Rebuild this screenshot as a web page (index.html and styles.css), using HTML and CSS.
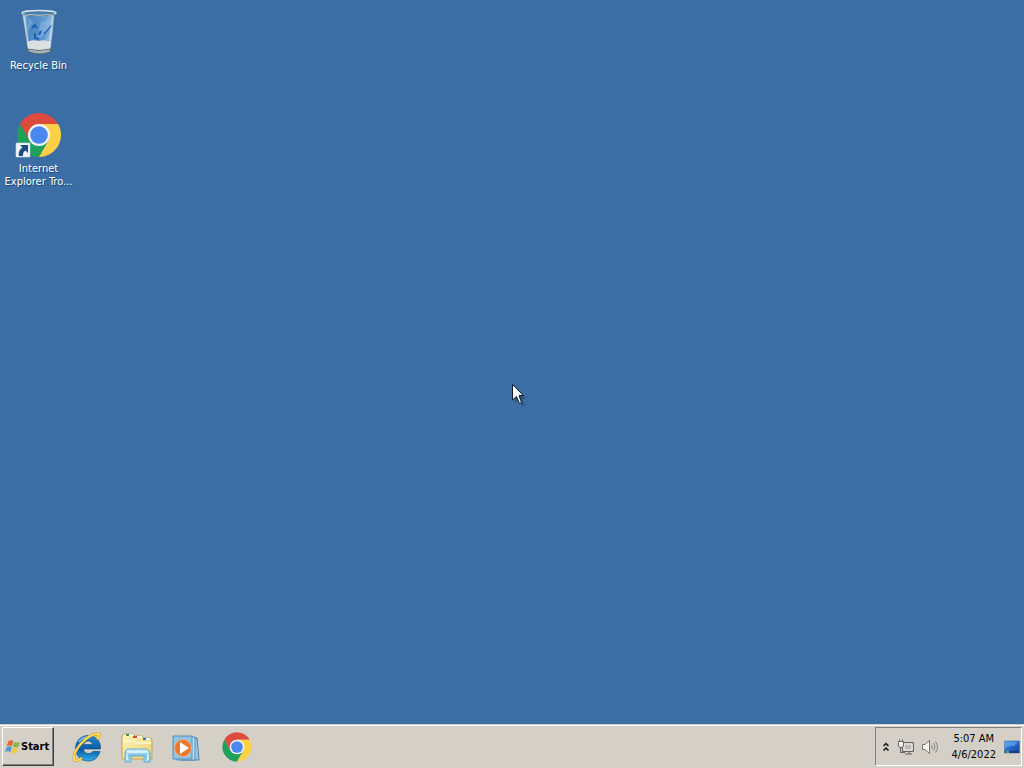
FILE: index.html
```html
<!DOCTYPE html>
<html lang="en">
<head>
<meta charset="utf-8">
<title>Desktop</title>
<link rel="stylesheet" href="styles.css">
</head>
<body>
<svg class="defs" aria-hidden="true">
  <defs>
    <symbol id="chrome" viewBox="0 0 48 48">
      <path fill="#dd4b3e" d="M24 24V13H43.05A22 22 0 0 0 4.95 13L14.47 29.5Z"/>
      <path fill="#1fa05d" d="M4.95 13A22 22 0 0 0 24 46L33.53 29.5L24 24L14.47 29.5Z"/>
      <path fill="#fdd047" d="M43.05 13A22 22 0 0 1 24 46L33.53 29.5L24 24V13Z"/>
      <circle cx="24" cy="24" r="11" fill="#f3f5f7"/>
      <circle cx="24" cy="24" r="8.8" fill="#4a87f0"/>
    </symbol>
    <linearGradient id="glass" x1="0" x2="1" y1="0" y2="0">
      <stop offset="0" stop-color="#bcd8ee"/><stop offset=".2" stop-color="#4d86c0"/><stop offset=".65" stop-color="#5f97cf"/><stop offset=".88" stop-color="#8db7dd"/><stop offset="1" stop-color="#315f8d"/>
    </linearGradient>
    <linearGradient id="ie" x1="0" x2="0" y1="0" y2="1">
      <stop offset="0" stop-color="#2487cf"/><stop offset=".55" stop-color="#0b5aa5"/><stop offset="1" stop-color="#36aee5"/>
    </linearGradient>
    <linearGradient id="folder" x1="0" x2="1" y1="0" y2="1">
      <stop offset="0" stop-color="#fff5bd"/><stop offset="1" stop-color="#ecd06a"/>
    </linearGradient>
    <linearGradient id="stand" x1="0" x2="0" y1="0" y2="1">
      <stop offset="0" stop-color="#d7f0f8"/><stop offset=".5" stop-color="#80c2e3"/><stop offset="1" stop-color="#add9e9"/>
    </linearGradient>
    <linearGradient id="screen" x1="0" x2="1" y1="0" y2="1">
      <stop offset="0" stop-color="#4da1ee"/><stop offset=".5" stop-color="#2368ca"/><stop offset="1" stop-color="#123c9b"/>
    </linearGradient>
  </defs>
</svg>
<div class="desktop">
  <main class="workspace">
    <a class="shortcut" href="#bin">
      <svg class="shortcut-icon" viewBox="0 0 48 48" aria-hidden="true">
        <path d="M7 5L12 41Q14 46 25 46Q35 46 36 41L41 5Z" fill="url(#glass)" stroke="#42637f" stroke-width=".7"/>
        <path d="M12 34Q17 31 24 33Q31 31 36 34L35 41Q24 46 13 41Z" fill="#dadfdf"/>
        <path d="M12 41Q24 44 36 41L35 44Q25 48 14 44Z" fill="#a7b4b4" stroke="#465b62" stroke-width=".8"/>
        <path d="M14 9L12 25L18 14ZM26 14L38 11L31 25L22 32ZM30 32L38 19L36 32Z" fill="#a6cbed" opacity=".35"/>
        <path d="M17 20l3-3 2 3M20 25v5l4 1M24 27l2-4" fill="none" stroke="#1761bc" stroke-width="2"/>
        <path d="M29 26l8-9" fill="none" stroke="#2568b2" stroke-width="1.500"/>
        <path d="M9 8L14 40M38 8L34 39" stroke="#dbeaf1" opacity=".75" stroke-width="1.300"/>
        <ellipse cx="24" cy="5" rx="17" ry="2.500" fill="#487da9" stroke="#d8e5ea" stroke-width="1.400"/>
        <path d="M8 6Q24 10 40 6" fill="none" stroke="#506879" stroke-width=".8"/>
      </svg>
      <span>Recycle Bin</span>
    </a>
    <a class="shortcut" href="#browser">
      <svg class="shortcut-icon" viewBox="0 0 48 48" aria-hidden="true">
        <use href="#chrome"/>
        <path d="M1 32H15V46H1Z" fill="#eff5fa" stroke="#c5d6e4" stroke-width=".6"/>
        <path d="M5 34H13V42L10.500 39.500Q7.500 41 8 45H4Q2.500 40 7.500 36.500Z" fill="#174d80"/>
      </svg>
      <span>Internet<br>Explorer Tro...</span>
    </a>
  </main>
  <svg class="cursor" viewBox="0 0 16 24" aria-hidden="true">
    <path d="M3 3V19L7 15L10 22L13 21L10 15H14Z" opacity=".25"/>
    <path d="M.5 .5V16L4.500 12.500L7.500 19.500L9.500 18.500L7 11.500H11.500Z" fill="#fff" stroke="#111c2b"/>
  </svg>
  <footer class="taskbar">
    <button class="start" type="button">
      <svg class="start-icon" viewBox="0 0 18 18" aria-hidden="true">
        <path d="M4 2Q7 .5 9.500 2.500L8 8Q5.500 6.500 2 8Z" fill="#e76735"/>
        <path d="M10.500 3Q13 5 17 3.500L15 9Q12 10.500 9 8.500Z" fill="#7dbb43"/>
        <path d="M2 9Q5 7.500 7.700 9L6 14.500Q3.500 13 0 14.500Z" fill="#4c98d9"/>
        <path d="M8.700 9.500Q11.500 11.500 14.700 10L13 15.500Q10 17 7 15Z" fill="#f4c73d"/>
      </svg>
      <span>Start</span>
    </button>
    <nav class="launchers" aria-label="Pinned programs">
      <button class="launcher" type="button" aria-label="Internet Explorer">
        <svg viewBox="0 0 32 32" aria-hidden="true">
          <path d="M29.500 18H12.500Q13 22.500 17.500 22.500Q20.500 22.500 22 20.500H29C27 27 23 30 17 30C9.500 30 4.500 24.500 4.500 17.500C4.500 10 10 4.500 17 4.500C25 4.500 30 10 29.500 18ZM12.500 13.500H21.500Q21 10 17.200 10Q13.500 10 12.500 13.500Z" fill="url(#ie)" stroke="#12538f" stroke-width=".7" fill-rule="evenodd"/>
          <path d="M8 11Q11 6 18 6" fill="none" stroke="#80c6ef" stroke-width="1.500"/>
          <path d="M26 8Q31 2 26 3C17 3 4 17 3 26C2.500 31 7 30 11 27" fill="none" stroke="#bd8a24" stroke-width="2.800"/>
          <path d="M26 8Q31 2 26 3C17 3 4 17 3 26C2.500 31 7 30 11 27" fill="none" stroke="#ffdc58" stroke-width="2"/>
        </svg>
      </button>
      <button class="launcher" type="button" aria-label="Windows Explorer">
        <svg viewBox="0 0 32 32" aria-hidden="true">
          <path d="M1 28V5L3 3H12L14 5H21L23 7H30L31 9V28Z" fill="url(#folder)" stroke="#c3a550"/>
          <path d="M4 4H12M13 6H21M22 8H29" stroke="#fff" stroke-width="2"/>
          <path d="M5 4H8" stroke="#389c48" stroke-width="2"/><path d="M12 6H16" stroke="#d84a2b" stroke-width="2"/><path d="M22 8H25" stroke="#2d76c8" stroke-width="2"/>
          <path d="M2 10H13L15 12H30" fill="none" stroke="#fff9ce" stroke-width="1.500"/>
          <path d="M4 21L6 18H26L29 21V31H23V25H10V31H4Z" fill="url(#stand)" stroke="#65acd0"/>
          <path d="M6 21H27M6 23V29M27 23V29" stroke="#e4f8fd" stroke-width="1.500"/>
        </svg>
      </button>
      <button class="launcher" type="button" aria-label="Windows Media Player">
        <svg viewBox="0 0 32 32" aria-hidden="true">
          <path d="M8 7H26L28 29H10Z" fill="#a4c9e3" stroke="#4384b7"/>
          <path d="M6 6H24V29H6Z" fill="#c3deee" stroke="#4d8bbb"/>
          <path d="M2 5H21V28H2Z" fill="#91c3e3" stroke="#518ebb"/>
          <circle cx="12" cy="17" r="8.500" fill="#ea792d" stroke="#f3b37b"/>
          <path d="M9 11L18 17L9 23Z" fill="#fff"/>
        </svg>
      </button>
      <button class="launcher" type="button" aria-label="Google Chrome">
        <svg viewBox="0 0 48 48" aria-hidden="true"><use href="#chrome"/></svg>
      </button>
    </nav>
    <section class="tray" aria-label="Notification area">
      <button class="tray-button tray-more" type="button" aria-label="Show hidden icons">
        <svg viewBox="0 0 8 10" aria-hidden="true"><path d="M1.500 4L4 1.500L6.500 4M1.500 8.500L4 6L6.500 8.500" fill="none" stroke="#111" stroke-width="1.500"/></svg>
      </button>
      <button class="tray-button" type="button" aria-label="Network">
        <svg viewBox="0 0 16 16" aria-hidden="true">
          <path d="M4.500 3.500H15.500V12.500H4.500Z" fill="#bdbab5" stroke="#67645f"/><path d="M6 5H14V11H6Z" fill="none" stroke="#f8f8f6"/>
          <path d="M7 15H14M11 13V15M2.500 8V13.500H7" fill="none" stroke="#66635f"/>
          <path d="M.5 2.500H5.500V6L4.500 8.500H1.500L.5 6Z" fill="#f4f3ef" stroke="#66635f"/><path d="M1.500 .5V3M4.500 .5V3" stroke="#66635f"/>
        </svg>
      </button>
      <button class="tray-button" type="button" aria-label="Volume">
        <svg viewBox="0 0 16 16" aria-hidden="true">
          <path d="M.5 5.500H3L7.500 1.500V14.500L3 10.500H.5Z" fill="#f7f6f3" stroke="#77736e"/>
          <path d="M9.500 6Q11 8 9.500 10M11.500 4Q14.500 8 11.500 12M13.500 2.500Q17.500 8 13.500 13.500" fill="none" stroke="#85817b"/>
        </svg>
      </button>
      <button class="clock" type="button"><time datetime="2022-04-06T05:07">5:07 AM<br>4/6/2022</time></button>
      <button class="tray-button" type="button" aria-label="Show desktop">
        <svg viewBox="0 0 16 16" aria-hidden="true"><path d="M.5 2H15.500V14H.5Z" fill="url(#screen)" stroke="#3c71b2" stroke-width=".6"/><path d="M1 3H14L10 7Q5 6 1 9Z" fill="#71b7ef" opacity=".5"/><path d="M1 13H15" stroke="#183368" stroke-width="1.500"/><path d="M2 13H5" stroke="#81c458" stroke-width="1.500"/></svg>
      </button>
    </section>
  </footer>
</div>
</body>
</html>
```
FILE: styles.css
```css
* { box-sizing: border-box; }
body { margin: 0; font: 11px/13px "DejaVu Sans Condensed", "DejaVu Sans", sans-serif; }
button { margin: 0; padding: 0; border: 0; background: none; color: inherit; font: inherit; }
svg { display: block; }
.defs { position: absolute; width: 0; height: 0; }
.desktop { position: relative; display: flex; flex-direction: column; min-height: 100vh; background: #3a6ea5; }
.workspace { flex: 1; display: flex; flex-direction: column; align-items: flex-start; gap: 39px; padding-top: 8px; }
.shortcut { display: flex; flex-direction: column; align-items: center; gap: 3px; width: 77px; color: #fff; text-align: center; text-decoration: none; white-space: nowrap; text-shadow: 1px 1px 1px #1c436e; }
.shortcut-icon { width: 48px; height: 48px; }
.cursor { position: absolute; left: 50%; top: 50%; width: 16px; height: 24px; }
.taskbar { display: flex; align-items: stretch; height: 44px; padding: 2px; border-top: 1px solid #d4d0c8; box-shadow: inset 0 1px #fff; background: #d4d0c8; }
.start { display: flex; align-items: center; width: 52px; padding-left: 2px; border: 1px solid; border-color: #fff #404040 #404040 #fff; box-shadow: inset -1px -1px #808080; font-weight: bold; }
.start-icon { width: 16px; height: 18px; }
.launchers { display: flex; align-items: center; gap: 18px; margin-left: 17px; }
.launcher svg { width: 32px; height: 32px; }
.tray { display: flex; align-items: center; gap: 8px; margin-left: auto; padding: 0 1px 0 6px; border: 1px solid; border-color: #808080 #fff #fff #808080; }
.tray-button svg { width: 16px; height: 16px; }
.tray-more svg { width: 8px; height: 10px; }
.clock { padding-left: 6px; line-height: 16px; text-align: center; }
```
